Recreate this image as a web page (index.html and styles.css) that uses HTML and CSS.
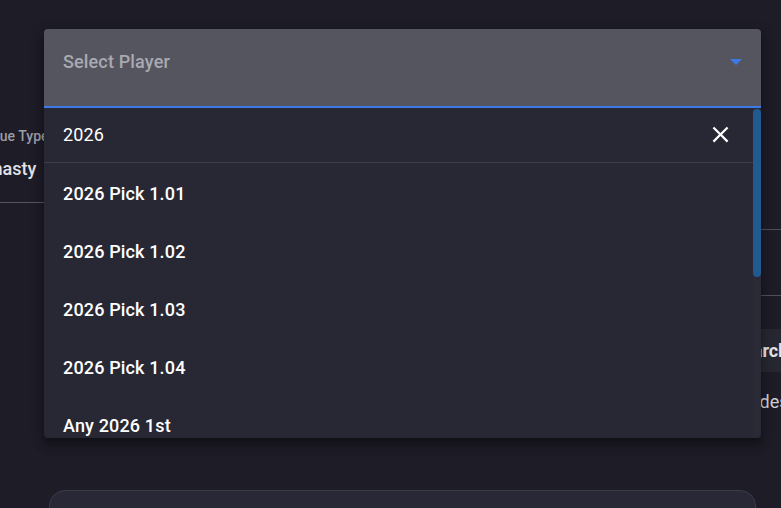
FILE: index.html
```html
<!DOCTYPE html>
<html lang="en">
<head>
<meta charset="utf-8">
<title>Trade Calculator</title>
<link rel="stylesheet" href="styles.css">
</head>
<body>
  <div class="page">
    <div class="top">
      <div class="side side-left">
        <div class="field">
          <div class="field-label">Value Type</div>
          <div class="field-value">Dynasty</div>
        </div>
      </div>
      <div class="middle"></div>
      <div class="side side-right">
        <div class="rule-box"></div>
        <div class="table-head"><span class="head-text">Search</span></div>
        <div class="table-row"><span class="row-text">Trades</span></div>
      </div>
    </div>
    <div class="card"></div>
  </div>

  <!-- open player picker -->
  <div class="menu">
    <div class="menu-head">
      <span class="menu-title">Select Player</span>
      <svg class="caret" width="12" height="6" viewBox="0 0 12 6"><polygon points="0,0 12,0 6,6" fill="#3d7ae8"/></svg>
    </div>
    <div class="menu-body">
      <div class="menu-list">
        <div class="search-row">
          <span class="search-text">2026</span>
          <svg class="clear" width="27" height="27" viewBox="0 0 24 24"><path fill="#ffffff" d="M19,6.41L17.59,5L12,10.59L6.41,5L5,6.41L10.59,12L5,17.59L6.41,19L12,13.41L17.59,19L19,17.59L13.41,12L19,6.41Z"/></svg>
        </div>
        <ul class="options">
          <li class="option">2026 Pick 1.01</li>
          <li class="option">2026 Pick 1.02</li>
          <li class="option">2026 Pick 1.03</li>
          <li class="option">2026 Pick 1.04</li>
          <li class="option">Any 2026 1st</li>
        </ul>
      </div>
      <div class="track"><div class="thumb"></div></div>
    </div>
  </div>
</body>
</html>
```
FILE: styles.css
```css
* { box-sizing: border-box; }

html, body {
  margin: 0;
  padding: 0;
  height: 100%;
  overflow: hidden;
}

body {
  background: #1d1c27;
  font-family: Roboto, "Liberation Sans", Arial, sans-serif;
  color: #ffffff;
  position: relative;
}

.page {
  display: flex;
  flex-direction: column;
}

.top {
  display: flex;
  height: 490px;
}

.side {
  overflow: hidden;
  flex: none;
}

.side-left {
  width: 44px;
  padding-top: 128px;
}

.field {
  width: 320px;
  margin-left: -20px;
  padding-bottom: 21px;
  border-bottom: 1px solid #55555f;
}

.field-label {
  font-size: 14px;
  font-weight: 500;
  line-height: 16px;
  color: #9d9da5;
  white-space: nowrap;
}

.field-value {
  margin-top: 13px;
  margin-left: -8px;
  font-size: 18px;
  font-weight: 500;
  line-height: 24px;
  color: #e2e2e6;
  white-space: nowrap;
}

.middle {
  flex: 1;
}

.side-right {
  width: 20px;
  padding-top: 229px;
}

.rule-box {
  width: 300px;
  height: 67px;
  border-top: 1px solid #4f4f59;
  border-bottom: 1px solid #4f4f59;
}

.table-head {
  width: 300px;
  margin-top: 33px;
  height: 43px;
  line-height: 43px;
  background: #272731;
  white-space: nowrap;
}

.head-text {
  display: inline-block;
  margin-left: -29px;
  font-size: 18px;
  font-weight: 700;
  color: #e4e4e8;
}

.table-row {
  width: 300px;
  margin-top: 18px;
  line-height: 24px;
  white-space: nowrap;
}

.row-text {
  display: inline-block;
  margin-left: -27px;
  font-size: 18px;
  color: #d0d0d4;
}

.card {
  margin-left: 49px;
  width: 707px;
  height: 80px;
  background: #282836;
  border: 1px solid #3b3b49;
  border-radius: 16px;
}

/* dropdown overlay */
.menu {
  position: absolute;
  left: 44px;
  top: 29px;
  width: 717px;
  height: 409px;
  border-radius: 4px;
  overflow: hidden;
  display: flex;
  flex-direction: column;
  background: #282835;
  letter-spacing: 0.15px;
  box-shadow: 0 5px 5px -3px rgba(0, 0, 0, 0.25),
              0 8px 10px 1px rgba(0, 0, 0, 0.18),
              0 3px 14px 2px rgba(0, 0, 0, 0.14);
}

.menu-head {
  flex: none;
  height: 79px;
  padding: 21px 19px 0 19px;
  background: #55555f;
  border-bottom: 2px solid #3d7ae8;
  display: flex;
  align-items: flex-start;
  justify-content: space-between;
}

.menu-title {
  font-size: 18px;
  font-weight: 500;
  line-height: 24px;
  color: #a9a9b1;
}

.caret {
  margin-top: 9px;
}

.menu-body {
  flex: 1;
  display: flex;
  min-height: 0;
}

.menu-list {
  flex: 1;
  min-width: 0;
}

.search-row {
  height: 55px;
  padding: 0 25px 0 19px;
  border-bottom: 1px solid #3e3e4a;
  display: flex;
  align-items: center;
  justify-content: space-between;
}

.search-text {
  font-size: 18px;
  line-height: 24px;
  color: #ffffff;
}

.clear {
  margin-right: -6px;
  margin-top: -1px;
}

.options {
  list-style: none;
  margin: 0;
  padding: 1px 0 0 0;
}

.option {
  height: 58px;
  padding-left: 19px;
  display: flex;
  align-items: center;
  font-size: 18px;
  font-weight: 500;
  color: #ffffff;
}

.track {
  flex: none;
  width: 8px;
  background: #2a2a36;
  padding-top: 1px;
}

.thumb {
  height: 168px;
  border-radius: 4px;
  background: #215a8e;
}
```
